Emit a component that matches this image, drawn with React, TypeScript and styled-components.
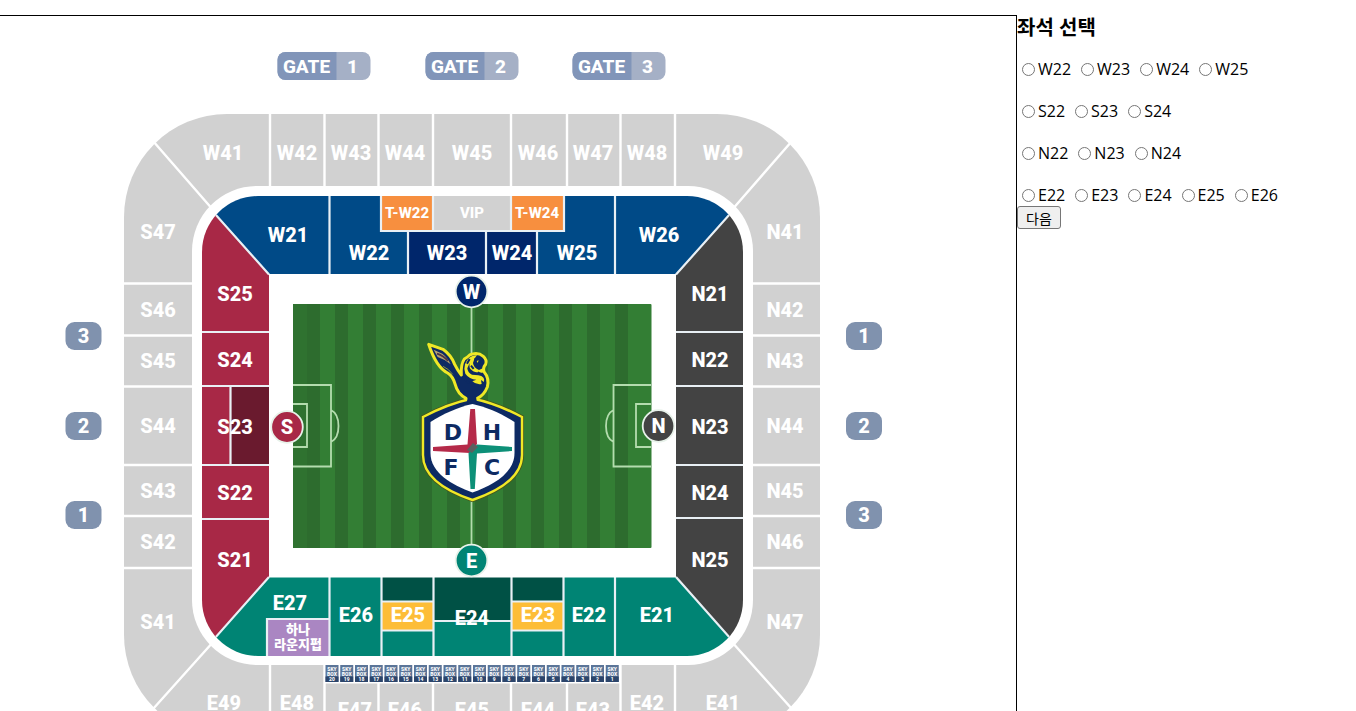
import React, { useState } from 'react';
import styled, { createGlobalStyle } from 'styled-components';

const GlobalStyle = createGlobalStyle`
  body {
    margin: 0;
    background: #fff;
    color: #000;
    font-family: 'Open Sans', 'Noto Sans CJK KR', sans-serif;
    font-size: 16px;
  }
`;

const Page = styled.main`
  display: flex;
  align-items: stretch;
  box-sizing: border-box;
  height: 100vh;
  padding-top: 15px;
  overflow: hidden;
`;

const MapPanel = styled.section`
  flex: 0 0 75%;
  box-sizing: border-box;
  border-top: 1px solid #000;
  border-right: 1px solid #000;
  overflow: hidden;
`;

const MapDrawing = styled.svg`
  display: block;
  width: 100%;
  height: auto;
`;

const Label = styled.text<{ $size?: number }>`
  font-family: Roboto, 'Noto Sans CJK KR', sans-serif;
  font-size: ${(p) => p.$size ?? 20}px;
  font-weight: 800;
  text-anchor: middle;
  fill: #fff;
`;

const CrestLetter = styled.text`
  font-family: 'DejaVu Sans', sans-serif;
  font-size: 22px;
  font-weight: 700;
  text-anchor: middle;
  fill: #0d2a63;
`;

const SeatForm = styled.form`
  flex: 1;
  min-width: 0;
`;

const Title = styled.h3`
  margin: 0 0 18px;
  font-size: 20px;
  line-height: 26px;
  font-weight: 700;
`;

const SeatRows = styled.div`
  display: grid;
  gap: 21px;
`;

const SeatRow = styled.div`
  display: flex;
  gap: 5px;
  line-height: 21px;
`;

const SeatOption = styled.label`
  display: flex;
  align-items: center;
`;

const Radio = styled.input`
  width: 13px;
  height: 13px;
  margin: 0 3px 0 5px;
`;

const NextButton = styled.button`
  display: block;
  height: 23px;
  padding: 0 8px;
  border: 1px solid #767676;
  border-radius: 3px;
  background: #efefef;
  color: #000;
  font-family: 'Noto Sans CJK KR', sans-serif;
  font-size: 14px;
  line-height: 20px;
`;

const C = {
  gray: '#d1d1d1',
  blue: '#004a87',
  navy: '#00266b',
  red: '#a82846',
  wine: '#6a1a2e',
  coal: '#434343',
  green: '#008474',
  forest: '#005145',
  yellow: '#fdbd37',
  orange: '#f78f3f',
  purple: '#aa86c2',
  line: '#b4dcae',
};

type Mark = [text: string, x: number, y: number, size?: number];

const upperTier: Mark[] = [
  ['W41', 223, 160], ['W42', 297, 160], ['W43', 351, 160], ['W44', 405, 160], ['W45', 472, 160],
  ['W46', 538, 160], ['W47', 593, 160], ['W48', 647, 160], ['W49', 723, 160],
  ['S47', 158, 239], ['S46', 158, 317], ['S45', 158, 368], ['S44', 158, 433], ['S43', 158, 498],
  ['S42', 158, 549], ['S41', 158, 629],
  ['N41', 785, 239], ['N42', 785, 317], ['N43', 785, 368], ['N44', 785, 433], ['N45', 785, 498],
  ['N46', 785, 549], ['N47', 785, 629],
  ['E49', 224, 710], ['E48', 297, 710], ['E47', 355, 717], ['E46', 405, 717], ['E45', 472, 717],
  ['E44', 538, 717], ['E43', 593, 717], ['E42', 647, 710], ['E41', 723, 710],
];

const lowerTier: Mark[] = [
  ['W21', 288, 242], ['W22', 369, 260], ['W23', 447, 260], ['W24', 512, 260], ['W25', 577, 260],
  ['W26', 659, 242], ['T-W22', 407, 218, 15], ['VIP', 472, 218, 15], ['T-W24', 537, 218, 15],
  ['S25', 235, 301], ['S24', 235, 367], ['S23', 235, 434], ['S22', 235, 500], ['S21', 235, 567],
  ['N21', 710, 301], ['N22', 710, 367], ['N23', 710, 434], ['N24', 710, 500], ['N25', 710, 567],
  ['E27', 290, 610], ['E26', 356, 622], ['E25', 408, 622], ['E24', 472, 625], ['E23', 538, 622],
  ['E22', 589, 622], ['E21', 657, 622], ['하나', 298, 634, 13], ['라운지펍', 298, 649, 13],
];

const Marks = ({ items }: { items: Mark[] }) => (
  <>
    {items.map(([text, x, y, size]) => (
      <Label key={text} x={x} y={y} $size={size}>{text}</Label>
    ))}
  </>
);

const Gate = ({ x, n }: { x: number; n: number }) => (
  <g>
    <rect x={x} y="52" width="93" height="28" rx="8" fill="#a5b0c6" />
    <path d={`M${x + 59} 52H${x + 8}a8 8 0 0 0-8 8v12a8 8 0 0 0 8 8h51z`} fill="#8195b9" />
    <Label x={x + 29} y="73" $size={19}>GATE</Label>
    <Label x={x + 75} y="73" $size={19}>{n}</Label>
  </g>
);

const SideGate = ({ x, y, n }: { x: number; y: number; n: number }) => (
  <g>
    <rect x={x} y={y} width="36" height="28" rx="9" fill="#8092ae" />
    <Label x={x + 18} y={y + 21}>{n}</Label>
  </g>
);

const Compass = ({ x, y, fill, name }: { x: number; y: number; fill: string; name: string }) => (
  <g>
    <circle cx={x} cy={y} r="15.8" fill={fill} stroke="#e8f2ea" strokeWidth="1.8" />
    <Label x={x} y={y + 7}>{name}</Label>
  </g>
);

const UpperRing = () => (
  <g>
    <rect x="124" y="114" width="696" height="624" rx="103" fill={C.gray} />
    <g stroke="#fff" strokeWidth="2.4">
      {[270, 324.5, 378.5, 433, 511, 567, 620.5, 675].map((x) => (
        <path key={x} d={`M${x} 114V190M${x} 660V738`} />
      ))}
      {[283.5, 335.5, 386.5, 465, 516, 568].map((y) => (
        <path key={y} d={`M124 ${y}H196M750 ${y}H820`} />
      ))}
      <path d="M153 141L214 211M792 141L731 211M153 709L214 641M792 709L731 641" />
    </g>
    <rect x="192" y="186" width="561" height="479" rx="65" fill="#fff" />
    <Marks items={upperTier} />
  </g>
);

const LowerBowl = () => (
  <g>
    <clipPath id="bowl">
      <rect x="202" y="196" width="541" height="460" rx="56" />
    </clipPath>
    <g clipPath="url(#bowl)">
      <path d="M199 196H746L676 275H269z" fill={C.blue} />
      <path d="M199 196L269 275V577L199 656z" fill={C.red} />
      <path d="M746 196L676 275V577L746 656z" fill={C.coal} />
      <path d="M199 656L269 577H676L746 656z" fill={C.green} />
      <rect x="231" y="387" width="38" height="78" fill={C.wine} />
      <rect x="408" y="231" width="129" height="43" fill={C.navy} />
      <rect x="382" y="196" width="51" height="35" fill={C.orange} />
      <rect x="433" y="196" width="78" height="35" fill={C.gray} />
      <rect x="512" y="196" width="51" height="35" fill={C.orange} />
      <rect x="382" y="577" width="51" height="25" fill={C.forest} />
      <rect x="433" y="577" width="78" height="44" fill={C.forest} />
      <rect x="511" y="577" width="52" height="25" fill={C.forest} />
      <rect x="382" y="602" width="51" height="28" fill={C.yellow} />
      <rect x="511" y="602" width="52" height="28" fill={C.yellow} />
      <rect x="268" y="619" width="61" height="37" fill={C.purple} />
      <g fill="none" stroke="#e9f0f5" strokeWidth="2.2">
        <path d="M329.5 196V274M615 196V274M381 196V231H564V196M433 196V231M511 196V231M408 231V274M486 231V274M537 231V274" />
        <path d="M202 332H269M202 386H269M202 465H269M202 519H269M230.5 386V465" />
        <path d="M676 332H743M676 386H743M676 465H743M676 518H743" />
        <path d="M329.5 577V656M381.5 577V656M433.5 577V656M511.5 577V656M563.5 577V656M615 577V656" />
        <path d="M381 601.5H433M381 630.5H433M511 601.5H563M511 630.5H563M433 621H511M267 656V619H329" />
        <path d="M199 196L269 274.5M746 196L676 274.5M199 656L269 577M746 656L676 577" />
      </g>
    </g>
    <rect x="269" y="274" width="407" height="303.5" fill="#fff" />
    <Marks items={lowerTier} />
  </g>
);

const Pitch = () => (
  <g>
    <rect x="293" y="304" width="358.5" height="244" rx="1" fill="#337e34" />
    <rect x="293" y="304" width="14" height="244" fill="#2f7230" />
    {Array.from({ length: 12 }, (_, i) => (
      <rect key={i} x={307 + i * 28} y="304" width="13" height="244" fill="#2d6c2e" />
    ))}
    <g fill="none" stroke={C.line} strokeWidth="1.8">
      <path d="M471.5 304V548" />
      <path d="M293 385H331V466.5H293M293 404H307V447H293M331 410C341 415 341 437 331 442" />
      <path d="M651 385H613.5V466.5H651M651 404H636V447H651M613.5 410C603.5 415 603.5 437 613.5 442" />
    </g>
  </g>
);

const shield =
  'M472.5 398.5C489 402 507 409 522 417V455C522 479 496 492 472.5 500C449 492 423 479 423 455V417C438 409 456 402 472.5 398.5Z';

const Crest = () => (
  <g>
    <path d={shield} fill="#0d2a63" stroke="#45561c" strokeWidth="4" />
    <g transform="translate(415 335) scale(.3333)">
      <path
        d="M41 28L84 43Q108 60 119 88Q129 108 139 120Q137 88 148 72Q158 66 164 60Q188 50 205 64Q217 75 212 88Q203 97 207 110Q224 130 217 156Q207 181 187 190V204H153V190Q128 178 120 147Q114 124 98 114Q64 98 41 28Z"
        fill="#0d2a63" stroke="#efe826" strokeWidth="9" strokeLinejoin="round"
      />
    </g>
    <path d={shield} fill="#0d2a63" stroke="#efe826" strokeWidth="2.4" />
    <g transform="translate(415 335) scale(.3333)">
      <path d="M159 186H183L187 210H153Z" fill="#0d2a63" />
      <path d="M56 44L82 56Q98 68 107 88Q88 72 68 66Z" fill="#b5a06f" />
      <path d="M66 56Q86 62 99 78" fill="none" stroke="#4b3345" strokeWidth="5" />
      <path d="M84 94Q102 102 113 118" fill="none" stroke="#8c9638" strokeWidth="3" />
      <path
        d="M150 88Q158 62 186 60Q176 72 174 84Q176 99 192 105L205 99Q207 108 203 113Q178 114 170 105Q161 100 164 84L157 100Q158 113 171 119L190 121Q211 124 207 141L198 135L200 147Q183 150 172 139L184 134Q163 133 151 116Q146 100 150 88Z"
        fill="#efe826"
      />
      <path d="M178 70L194 66L206 75L196 80L205 87L190 95L180 88Z" fill="#0d2a63" />
      <path d="M185 78L191 76L188 84Z" fill="#efe826" />
      <path d="M164 72L156 86M168 92L176 102M143 124Q151 138 164 144M188 112L200 118" fill="none" stroke="#0d2a63" strokeWidth="6" />
    </g>
    <path
      d="M472.5 404C487 407 502 414 514.5 422V453C514.5 473 493 485 472.5 492.5C452 485 430.5 473 430.5 453V422C443 414 458 407 472.5 404Z"
      fill="#fff"
    />
    <path d="M470.3 409H475L477 444L470 453L433 451V447L467.5 444.5Z" fill="#b52a49" />
    <path d="M477 444.5L512 447V451L477 453.5L474.8 489H470.5L468.5 453Z" fill="#0d9078" />
    <path d="M467 450L472 453L478 447L473 443Z" fill="#5a605f" />
    <CrestLetter x="453" y="440">D</CrestLetter>
    <CrestLetter x="492" y="440">H</CrestLetter>
    <CrestLetter x="451" y="475">F</CrestLetter>
    <CrestLetter x="492" y="475">C</CrestLetter>
  </g>
);

const SkyBoxes = () => (
  <g>
    <rect x="324" y="664" width="297" height="19.5" fill="#fff" />
    {Array.from({ length: 20 }, (_, i) => {
      const x = 325.5 + i * 14.75;
      return (
        <g key={i}>
          <rect x={x} y="665" width="13" height="17" fill="#5b7598" />
          <rect x={x} y="676.5" width="13" height="5.5" fill="#2c456b" />
          <Label x={x + 6.5} y="670.5" $size={5}>SKY</Label>
          <Label x={x + 6.5} y="675.5" $size={5}>BOX</Label>
          <Label x={x + 6.5} y="681" $size={5}>{20 - i}</Label>
        </g>
      );
    })}
  </g>
);

const StadiumMap = () => (
  <MapDrawing viewBox="0 16 1016 760" role="img" aria-label="경기장 좌석 배치도">
    {[277.5, 425.5, 572.5].map((x, i) => <Gate key={x} x={x} n={i + 1} />)}
    {[322, 412, 501].map((y, i) => (
      <g key={y}>
        <SideGate x={65.5} y={y} n={3 - i} />
        <SideGate x={846} y={y} n={i + 1} />
      </g>
    ))}
    <UpperRing />
    <SkyBoxes />
    <LowerBowl />
    <Pitch />
    <Crest />
    <Compass x={471.5} y={291.5} fill={C.navy} name="W" />
    <Compass x={471.5} y={560.5} fill={C.green} name="E" />
    <Compass x={287} y={427} fill={C.red} name="S" />
    <Compass x={658.5} y={426} fill={C.coal} name="N" />
  </MapDrawing>
);

const seatRows = [
  ['W22', 'W23', 'W24', 'W25'],
  ['S22', 'S23', 'S24'],
  ['N22', 'N23', 'N24'],
  ['E22', 'E23', 'E24', 'E25', 'E26'],
];

export default function App() {
  const [seat, setSeat] = useState('');

  return (
    <>
      <GlobalStyle />
      <Page>
        <MapPanel>
          <StadiumMap />
        </MapPanel>
        <SeatForm onSubmit={(e) => e.preventDefault()}>
          <Title>좌석 선택</Title>
          <SeatRows>
            {seatRows.map((row) => (
              <SeatRow key={row[0]}>
                {row.map((name) => (
                  <SeatOption key={name}>
                    <Radio
                      type="radio"
                      name="seat"
                      value={name}
                      checked={seat === name}
                      onChange={() => setSeat(name)}
                    />
                    {name}
                  </SeatOption>
                ))}
              </SeatRow>
            ))}
          </SeatRows>
          <NextButton type="submit">다음</NextButton>
        </SeatForm>
      </Page>
    </>
  );
}
